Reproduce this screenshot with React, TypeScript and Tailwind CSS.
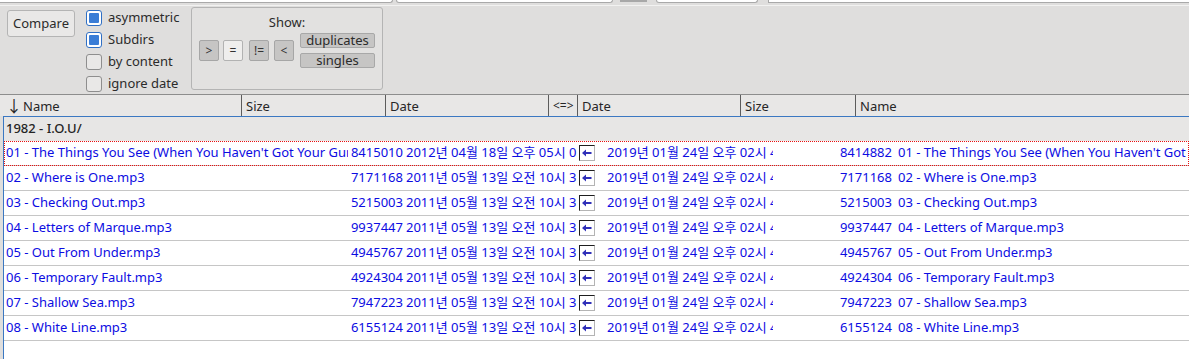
import React from 'react';

// Directory compare view: toolbar with options, a two-sided file table below.

type Row = {
  name: string;
  size: string;
  date: string;
  rsize: string;
  rdate: string;
};

const ROWS: Row[] = [
  {
    name: "01 - The Things You See (When You Haven't Got Your Gun).mp3",
    size: '8415010',
    date: '2012년 04월 18일 오후 05시 03분 21초',
    rsize: '8414882',
    rdate: '2019년 01월 24일 오후 02시 41분 08초',
  },
  { name: '02 - Where is One.mp3', size: '7171168', date: '2011년 05월 13일 오전 10시 31분 44초', rsize: '7171168', rdate: '2019년 01월 24일 오후 02시 41분 09초' },
  { name: '03 - Checking Out.mp3', size: '5215003', date: '2011년 05월 13일 오전 10시 31분 45초', rsize: '5215003', rdate: '2019년 01월 24일 오후 02시 41분 09초' },
  { name: '04 - Letters of Marque.mp3', size: '9937447', date: '2011년 05월 13일 오전 10시 31분 46초', rsize: '9937447', rdate: '2019년 01월 24일 오후 02시 41분 10초' },
  { name: '05 - Out From Under.mp3', size: '4945767', date: '2011년 05월 13일 오전 10시 31분 47초', rsize: '4945767', rdate: '2019년 01월 24일 오후 02시 41분 10초' },
  { name: '06 - Temporary Fault.mp3', size: '4924304', date: '2011년 05월 13일 오전 10시 31분 48초', rsize: '4924304', rdate: '2019년 01월 24일 오후 02시 41분 11초' },
  { name: '07 - Shallow Sea.mp3', size: '7947223', date: '2011년 05월 13일 오전 10시 31분 49초', rsize: '7947223', rdate: '2019년 01월 24일 오후 02시 41분 11초' },
  { name: '08 - White Line.mp3', size: '6155124', date: '2011년 05월 13일 오전 10시 31분 50초', rsize: '6155124', rdate: '2019년 01월 24일 오후 02시 41분 12초' },
];

function CheckBox({ checked, label }: { checked?: boolean; label: string }) {
  return (
    <div className="flex h-[22px] items-center">
      {checked ? (
        <span className="flex h-4 w-4 items-center justify-center rounded-[3px] border border-[#2f6fc4] bg-white">
          <span className="h-[10px] w-[10px] rounded-[1px] bg-[#3a7dd6]" />
        </span>
      ) : (
        <span className="h-4 w-4 rounded-[3px] border border-[#8e8e8e] bg-[#e9e8e7]" />
      )}
      <span className="ml-[6px] text-[13px] text-[#2b2b2b]">{label}</span>
    </div>
  );
}

function Toggle({ label, on }: { label: string; on?: boolean }) {
  return (
    <span
      className={
        'flex h-[21px] w-[20px] items-center justify-center rounded-[2px] border text-[12px] text-[#333] ' +
        (on ? 'border-[#a6a6a6] bg-[#c6c5c4]' : 'border-[#b2b2b2] bg-[#efeeed]')
      }
    >
      {label}
    </span>
  );
}

function Pill({ label }: { label: string }) {
  return (
    <span className="flex h-[15px] w-[75px] items-center justify-center rounded-[2px] border border-[#a8a8a8] bg-[#c6c5c4] text-[13px] leading-none text-[#2b2b2b]">
      {label}
    </span>
  );
}

function ArrowBox() {
  return (
    <span className="ml-[2px] flex h-4 w-4 items-center justify-center border-t border-l border-t-[#1e1e1e] border-l-[#1e1e1e] border-r border-b border-r-[#b4b4b4] border-b-[#b4b4b4] bg-white">
      <svg width="12" height="10" viewBox="0 0 12 10">
        <path d="M1 5 L5 1.5 L5 4 L10.5 4 L10.5 6 L5 6 L5 8.5 Z" fill="#2f2fb8" />
      </svg>
    </span>
  );
}

function TopStrip() {
  return (
    <div className="relative h-[6px]">
      <div className="flex h-[3px]">
        <div className="w-[393px] rounded-br-[3px] border-r border-b border-[#a9a9a9] bg-white" />
        <div className="ml-[3px] w-[217px] rounded-b-[3px] border-x border-b border-[#a9a9a9] bg-white" />
        <div className="ml-[7px] h-[2px] w-[27px] bg-[#a8a8a8]" />
        <div className="ml-[9px] w-[102px] rounded-b-[3px] border-x border-b border-[#a9a9a9] bg-white" />
        <div className="ml-[10px] flex-1 border-l border-b border-[#a9a9a9] bg-white" />
      </div>
      <div className="mt-[2px] h-px bg-[#f2f2f1]" />
    </div>
  );
}

function Toolbar() {
  return (
    <div className="flex h-[88px] items-start">
      <button className="ml-[7px] mt-[4px] h-[27px] w-[68px] rounded-[3px] border border-[#b4b4b4] bg-[#e9e8e7] text-[13px] text-[#2b2b2b]">
        Compare
      </button>
      <div className="ml-[11px] mt-[1px] flex w-[99px] flex-col">
        <CheckBox checked label="asymmetric" />
        <CheckBox checked label="Subdirs" />
        <CheckBox label="by content" />
        <CheckBox label="ignore date" />
      </div>
      <div className="ml-[6px] mt-[1px] flex h-[83px] w-[192px] flex-col items-center rounded-[3px] border border-[#b4b4b4] bg-[#e2e1e0]">
        <div className="mt-[5px] text-[13px] leading-[18px] text-[#2b2b2b]">Show:</div>
        <div className="mt-[2px] flex w-full items-center pl-[7px]">
          <Toggle label=">" on />
          <span className="ml-[4px]"><Toggle label="=" /></span>
          <span className="ml-[6px]"><Toggle label="!=" on /></span>
          <span className="ml-[5px]"><Toggle label="<" on /></span>
          <div className="ml-[6px] flex flex-col gap-[5px]">
            <Pill label="duplicates" />
            <Pill label="singles" />
          </div>
        </div>
      </div>
    </div>
  );
}

function Header() {
  const cell = 'flex h-full items-end pb-[1px] pl-[4px] border-l border-[#5c5c5c]';
  return (
    <div className="flex h-[22px] border-t border-[#8d8d8d] bg-[#e8e7e6] text-[13px] leading-[18px] text-[#262626]">
      <div className="flex h-full w-[241px] items-end pb-[1px] pl-[6px]">
        <span className="mr-[1px] text-[16px] leading-[18px]">↓</span>Name
      </div>
      <div className={cell + ' w-[144px]'}>Size</div>
      <div className={cell + ' w-[163px]'}>Date</div>
      <div className={cell + ' w-[29px] pl-[2px] text-[12px]'}>&lt;=&gt;</div>
      <div className={cell + ' w-[163px]'}>Date</div>
      <div className={cell + ' w-[115px]'}>Size</div>
      <div className={cell + ' flex-1'}>Name</div>
    </div>
  );
}

function FileRow({ row, focused }: { row: Row; focused?: boolean }) {
  return (
    <div
      className={
        'flex h-[25px] items-center border-b border-[#c6c6c6] bg-white text-[13px] text-[#0c0ce2] whitespace-nowrap ' +
        (focused ? 'outline-1 outline-dotted -outline-offset-1 outline-[#e81010]' : '')
      }
    >
      <div className="w-[344px] overflow-hidden pl-[2px]">{row.name}</div>
      <div className="flex w-[55px] justify-end">{row.size}</div>
      <div className="w-[174px] overflow-hidden pl-[3px]">{row.date}</div>
      <div className="flex w-[30px] items-center">
        <ArrowBox />
      </div>
      <div className="w-[166px] overflow-hidden">{row.rdate}</div>
      <div className="flex w-[119px] justify-end">{row.rsize}</div>
      <div className="flex-1 overflow-hidden pl-[6px]">{row.name}</div>
    </div>
  );
}

export default function App() {
  return (
    <div className="h-[359px] w-[1189px] overflow-hidden bg-[#dfdedd] font-['Noto_Sans','Noto_Sans_CJK_KR',sans-serif]">
      <TopStrip />
      <Toolbar />
      <Header />
      <div className="ml-[3px] h-[243px] border-t border-l border-[#3b78c2] bg-white">
        <div className="flex h-[24px] items-center bg-[#e7e6e5] pl-[2px] text-[13px] font-medium text-[#242424]">
          1982 - I.O.U/
        </div>
        {ROWS.map((r, i) => (
          <FileRow key={r.name} row={r} focused={i === 0} />
        ))}
      </div>
    </div>
  );
}
